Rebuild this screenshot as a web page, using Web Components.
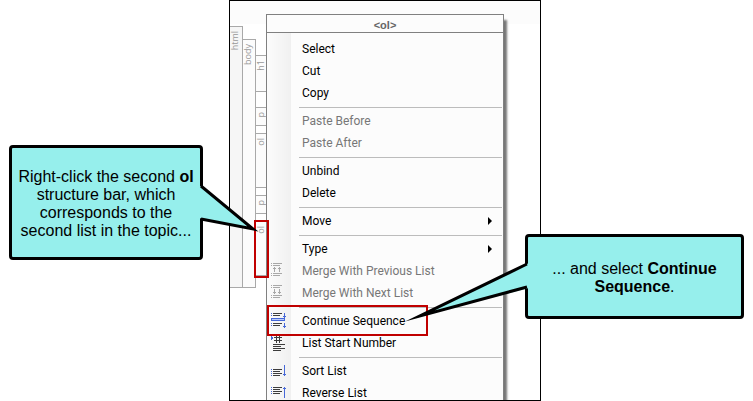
<!DOCTYPE html>
<html lang="en">
<head>
<meta charset="utf-8">
<title>Continue Sequence</title>
<style>
html, body { margin: 0; height: 100%; }
body { background: #fff; overflow: hidden; }
</style>
</head>
<body>
<help-figure></help-figure>
<script>
const define = (name, html, setup) => customElements.define(name, class extends HTMLElement {
  connectedCallback() {
    if (this.shadowRoot) return;
    const t = document.createElement('template');
    t.innerHTML = html;
    this.attachShadow({ mode: 'open' }).append(t.content.cloneNode(true));
    if (setup) setup(this, this.shadowRoot);
  }
});

const dots = (rows, c) => rows.map(y => `<path stroke="${c}" d="M3 ${y}.5h1"/>`).join('');
const lines = (rows, c) => rows.map(([y, x2]) => `<path stroke="${c}" d="M5 ${y}.5H${x2}"/>`).join('');
const G = '#a8a8a8', K = '#3c3c3c', B = '#4668d8';
const icons = {
  'merge-prev': dots([3, 5, 13, 15], G) + lines([[3, 14], [5, 12], [13, 14], [15, 12]], G) +
    `<path stroke="${G}" d="M6.5 7v5M11.5 7v5M5 8.5h3M10 8.5h3"/>`,
  'merge-next': dots([3, 5, 13, 15], G) + lines([[3, 14], [5, 12], [13, 14], [15, 12]], G) +
    `<path stroke="${G}" d="M6.5 7v5M11.5 7v5M5 10.5h3M10 10.5h3"/>`,
  'continue': dots([3, 5, 13, 15], B) + lines([[3, 14], [5, 12], [13, 14], [15, 12]], K) +
    `<path fill="#b9cbfa" stroke="${B}" d="M3.5 8.5h13v2h-13z"/><path stroke="${B}" d="M16.5 3v5M15 6.5h3M16.5 13v5M15 16.5h3"/>`,
  'number': `<path fill="${B}" d="M3 4l2 2-2 2z"/><path stroke="${K}" d="M8.5 4v7M11.5 4v7M6 5.5h8M6 8.5h8"/>` +
    lines([[12, 17], [14, 13], [16, 17], [18, 13]], K),
  'sort': dots([9, 11, 13, 15], B) + lines([[9, 14], [11, 12], [13, 14], [15, 12]], K) +
    `<path stroke="${B}" d="M16.5 5v11M15 14.5h3"/>`,
  'reverse': dots([5, 7, 9, 11], B) + lines([[5, 14], [7, 12], [9, 14], [11, 12]], K) +
    `<path stroke="${B}" d="M16.5 5v11M15 6.5h3"/>`
};

define('structure-bar', `
<style>
:host { display: block; box-sizing: border-box; border: 1px solid #a9a9a9; border-left: 0; background: #fcfcfc;
  font: 9px/10px "Open Sans", sans-serif; color: #999; }
span { display: block; writing-mode: vertical-rl; transform: rotate(180deg); white-space: nowrap; padding-bottom: 4px; }
</style><span><slot></slot></span>`);

define('menu-item', `
<style>
:host { display: block; }
button { display: grid; grid-template-columns: 35px 1fr 15px; align-items: center; width: 100%; height: 22px; padding: 0;
  border: 0; background: none; text-align: left; color: #000; font: 12px/22px Roboto, sans-serif; white-space: nowrap; }
button:disabled { color: #777; }
svg { display: block; width: 20px; height: 22px; margin-left: 1px; fill: none; }
i { display: none; width: 0; height: 0; border: 4px solid transparent; border-left-color: #000; border-right: 0; }
:host([submenu]) i { display: block; }
</style>
<button type="button"><svg viewBox="0 0 20 22" shape-rendering="crispEdges" aria-hidden="true"></svg><span><slot></slot></span><i></i></button>`,
(host, root) => {
  root.querySelector('svg').innerHTML = icons[host.getAttribute('icon')] || '';
  root.querySelector('button').disabled = host.hasAttribute('disabled');
});

define('menu-separator', `
<style>:host { display: block; height: 1px; margin: 3px 1px 2px 32px; background: #bcbcbc; }</style>`);

define('context-menu', `
<style>
:host { display: block; box-sizing: border-box; border: 1px solid #808080; background: #fcfcfc; box-shadow: 3px 6px 2px #777; }
header { height: 17px; border-bottom: 1px solid #808080; text-align: center; color: #666; font: bold 11px/20px "Liberation Sans", Arial, sans-serif; }
.items { padding-top: 5px; background: linear-gradient(90deg, #fcfcfc, #f0f0f0) 0 0 / 24px 100% no-repeat; }
</style>
<header><slot name="title"></slot></header><div class="items"><slot></slot></div>`);

define('call-out', `
<style>
:host { display: flex; box-sizing: border-box; align-items: center; justify-content: center; text-align: center;
  border: 3px solid #000; border-radius: 4px; background: #96efec; color: #000;
  font: 16px/18px "Liberation Sans", Arial, sans-serif; }
svg { position: absolute; overflow: visible; width: 1px; height: 1px; top: -3px; }
:host([side=right]) svg { right: 0; }
:host([side=left]) svg { left: -3px; }
</style>
<svg aria-hidden="true"></svg><span><slot></slot></span>`,
(host, root) => {
  root.querySelector('svg').innerHTML = host.getAttribute('side') === 'right'
    ? '<path fill="#96efec" d="M0 40L54 84L0 73Z"/><path fill="none" stroke="#000" stroke-width="3" stroke-miterlimit="20" d="M2 41L54 84L2 74"/>'
    : '<path fill="#96efec" d="M4 29L-105 82L4 54Z"/><path fill="none" stroke="#000" stroke-width="3" stroke-miterlimit="20" d="M2 30L-105 82L2 53"/>';
});

define('editor-view', `
<style>
:host { display: grid; grid-template-columns: 13px 13px 10px 1fr; box-sizing: border-box; height: 100%; overflow: hidden;
  border: 1px solid #000; background: linear-gradient(#fcfcfc, #fcfcfc) 0 0 / 100% 23px no-repeat, #fff; }
.html, .body { align-self: start; }
.html { margin-top: 25px; height: 262px; background: #f6f6f6; }
.body { margin-top: 38px; height: 249px; }
.tracks { display: flex; flex-direction: column; gap: 7px; padding-top: 54px; }
.tracks structure-bar { border-right: 0; height: 55px; flex: none; }
.tracks .p { height: 19px; }
.tracks .h1 { height: 37px; margin-bottom: 8px; }
context-menu { margin: 13px 36px 0 0; align-self: start; }
</style>
<structure-bar class="html">html</structure-bar>
<structure-bar class="body">body</structure-bar>
<div class="tracks">
<structure-bar class="h1">h1</structure-bar><structure-bar class="p">p</structure-bar><structure-bar>ol</structure-bar><structure-bar class="p">p</structure-bar><structure-bar>ol</structure-bar>
</div>
<context-menu><span slot="title">&lt;ol&gt;</span>
<menu-item>Select</menu-item><menu-item>Cut</menu-item><menu-item>Copy</menu-item>
<menu-separator></menu-separator>
<menu-item disabled>Paste Before</menu-item><menu-item disabled>Paste After</menu-item>
<menu-separator></menu-separator>
<menu-item>Unbind</menu-item><menu-item>Delete</menu-item>
<menu-separator></menu-separator>
<menu-item submenu>Move</menu-item>
<menu-separator></menu-separator>
<menu-item submenu>Type</menu-item><menu-item disabled icon="merge-prev">Merge With Previous List</menu-item><menu-item disabled icon="merge-next">Merge With Next List</menu-item>
<menu-separator></menu-separator>
<menu-item icon="continue">Continue Sequence</menu-item><menu-item icon="number">List Start Number</menu-item>
<menu-separator></menu-separator>
<menu-item icon="sort">Sort List</menu-item><menu-item icon="reverse">Reverse List</menu-item>
</context-menu>`);

define('help-figure', `
<style>
:host { display: grid; position: relative; grid-template-columns: 229px 1fr 212px; height: 100%; }
editor-view { grid-column: 2; min-width: 0; }
.mark { position: absolute; box-sizing: border-box; border: 2px solid #c00000; }
.bar { left: 254px; top: 220px; width: 15px; height: 58px; }
.item { left: 267px; top: 305px; width: 161px; height: 31px; }
call-out { position: absolute; }
.first { left: 9px; top: 145px; width: 194px; height: 115px; padding-top: 3px; }
.second { right: 9px; top: 234px; width: 219px; height: 85px; padding-top: 2px; }
</style>
<editor-view></editor-view>
<div class="mark bar"></div><div class="mark item"></div>
<call-out class="first" side="right"><span>Right-click the second <b>ol</b><br>structure bar, which<br>corresponds to the<br>second list in the topic...</span></call-out>
<call-out class="second" side="left"><span>... and select <b>Continue<br>Sequence</b>.</span></call-out>`);
</script>
</body>
</html>
